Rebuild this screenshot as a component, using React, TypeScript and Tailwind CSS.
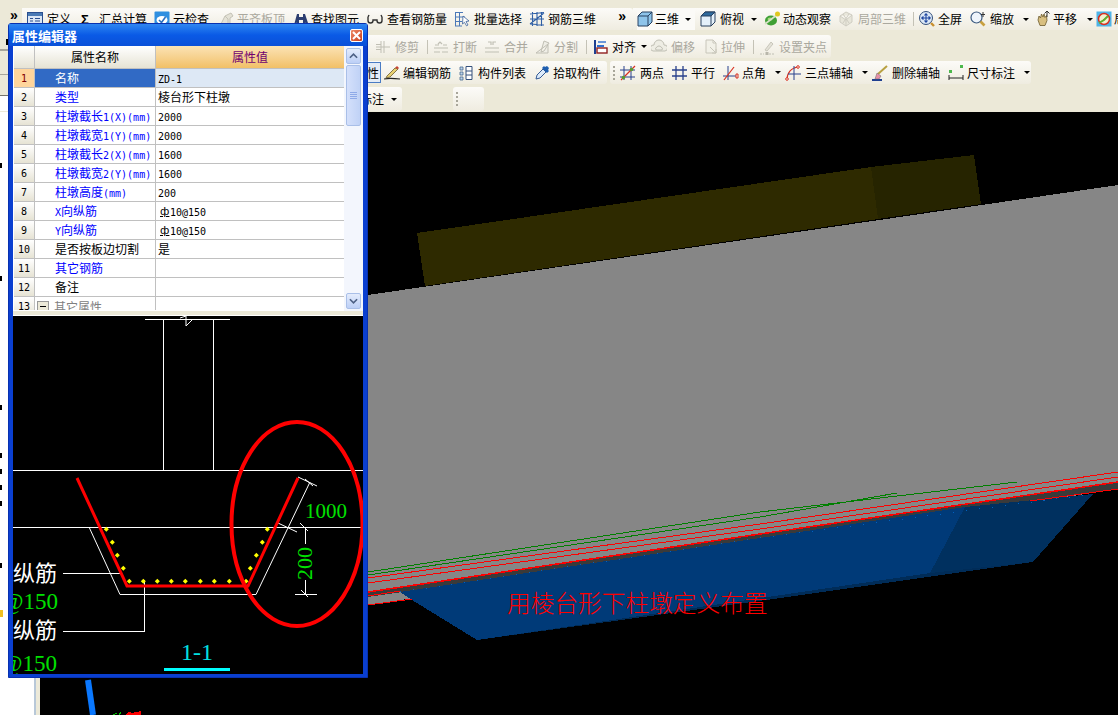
import type { ReactNode } from "react";

// 16x16 toolbar glyphs
const icons: Record<string, ReactNode> = {
  def: <><rect x=".5" y="1.5" width="15" height="13" fill="#dbe6f4" stroke="#2a4f8f" /><rect x="1" y="2" width="14" height="3" fill="#4a7ab5" /><path d="M3 7.5h3M8 7.5h5M3 10h3M8 10h5M3 12.5h3M8 12.5h5" stroke="#2a4f8f" /></>,
  cloud: <><rect x=".5" y=".5" width="15" height="15" rx="1" fill="#2f8fe0" /><ellipse cx="8" cy="9" rx="5.5" ry="4" fill="#fff" /><path d="M5 9l2.5 2.5L11.5 6" fill="none" stroke="#2a70c0" strokeWidth="1.6" /></>,
  flat: <path d="M2 13l4-8 6-3 2 3-3 2v5l-4 2H2zM6 5l3 3v5" fill="#e4e2d6" stroke="#c4c2b6" />,
  binoculars: <><path d="M4 3h2v3h4V3h2l3 9a2.5 2.5 0 1 1-5 1V9H6v4a2.5 2.5 0 1 1-5 1z" fill="#2c3e70" /><circle cx="3.6" cy="13" r="1.2" fill="#9db4dc" /><circle cx="12.4" cy="13" r="1.2" fill="#9db4dc" /></>,
  glasses: <path d="M1 6l1-2M15 6l-1-2M1 6v3.5a2.5 2.5 0 0 0 5 0V9h4v.5a2.5 2.5 0 0 0 5 0V6" fill="none" stroke="#333" strokeWidth="1.4" />,
  batch: <><path d="M1 1.5h8M1 6h10M1 10.5h7M1 15h7M1.500 1v14M5.500 1v14" stroke="#4a78b8" fill="none" /><path d="M9 5l6 5-3 .5 2 3.500-1.500.8-2-3.500L8.500 13z" fill="#fff" stroke="#3a5f99" strokeWidth=".8" /></>,
  rebar: <path d="M1 3l14-1.500M1 8h14M1 13l14 1M3.500 1v14M8 1v14M12.500 1v14M1 13L15 2" fill="none" stroke="#2f5fa5" strokeWidth="1.100" />,
  cube: <><path d="M1 5l4-4h10v10l-4 4H1z" fill="#8ec4ea" stroke="#28405f" /><path d="M1 5h10v10M11 5l4-4" fill="none" stroke="#28405f" /></>,
  top: <><path d="M1 5l4-4h10v10l-4 4H1z" fill="#e4f0fa" stroke="#28405f" /><path d="M1 5l4-4h10l-4 4z" fill="#2f6a9c" stroke="#28405f" /><path d="M11 5v10M11 5l4-4" fill="none" stroke="#28405f" /></>,
  orbit: <><ellipse cx="7" cy="9.500" rx="6" ry="5" fill="#3fa035" /><ellipse cx="6" cy="8" rx="2.500" ry="1.500" fill="#a4dc7c" /><path d="M1 13L14 3" stroke="#d8e0c8" strokeWidth="1.600" /><circle cx="13.500" cy="3" r="2.500" fill="#e0c820" /></>,
  mesh: <path d="M8 1l6 3v7l-6 4-6-4V5zM2 5l6 4 6-5M8 9v6M5 3l6 9M11 3l-6 9" fill="#e8e6da" stroke="#cfcdc2" />,
  full: <><circle cx="7" cy="7" r="6.500" fill="#dce8f6" stroke="#34507c" /><path d="M7 2.500v9M2.500 7h9M7 2.500L5.500 4.500M7 2.500l1.500 2M7 11.500l-1.500-2M7 11.500l1.500-2M2.500 7l2-1.500M2.500 7l2 1.500M11.500 7l-2-1.500M11.500 7l-2 1.500" fill="none" stroke="#1f47a0" strokeWidth="1.100" /><path d="M12 12l3 3" stroke="#c89030" strokeWidth="2.400" /></>,
  zoom: <><circle cx="6.500" cy="6.500" r="5.500" fill="#eef4fb" stroke="#3c5a80" strokeWidth="1.200" /><path d="M10.500 10.500l4 4" stroke="#c8a040" strokeWidth="2.600" /><path d="M13 1v5M11 3.500h4" stroke="#333" /></>,
  pan: <><path d="M3 9l1-4 1.500 2 1-4 1.500 3 1-3 1 3.500 1.500-2 .5 5-2 5H5z" fill="#d8bf80" stroke="#6c5a2c" strokeWidth=".8" /><path d="M12 0v6M9.500 2.500L12 0l2.500 2.500" fill="none" stroke="#333" /></>,
  report: <><rect x=".5" y=".5" width="15" height="15" fill="#4fb4e8" /><circle cx="8" cy="8" r="5.500" fill="#f4f0d0" stroke="#d83020" strokeWidth="1.500" /><path d="M3 12l5-3 4-4" stroke="#60b030" strokeWidth="2" /></>,
  trim: <path d="M1 8h14M6 2v12M9 2v12M1 5.500h5M1 10.500h5" fill="none" stroke="#c0bfb4" />,
  brk: <path d="M1 13h6M9 13h6M1 9h14M5 5l2-2 2 2M2 6h4M10 6h4" fill="none" stroke="#c0bfb4" strokeWidth="1.200" />,
  merge: <path d="M1 13h14M1 9h14M4 3h3v3M12 3H9v3" fill="none" stroke="#c0bfb4" strokeWidth="1.200" />,
  split: <path d="M1 14h12V6M1 14l12-9M9 2l5 2-5 8-3 1 1-4z" fill="#efeee6" stroke="#c0bfb4" />,
  align: <><path d="M2 1v14" stroke="#1f3f90" strokeWidth="2" /><rect x="4" y="9" width="10" height="5" fill="#fff" stroke="#902020" strokeWidth="1.400" /><rect x="4" y="6" width="7" height="2" fill="#2f6fd0" /><path d="M5 3h8" stroke="#2f6fd0" strokeWidth="1.400" /></>,
  offset: <path d="M2 12a3 3 0 0 1 1-6 5 5 0 0 1 10 0 3 3 0 0 1 1 6zM5 11a2 2 0 0 1 1-3 2.500 2.500 0 0 1 4 0 2 2 0 0 1 1 3z" fill="#eeede4" stroke="#c0bfb4" />,
  stretch: <path d="M3 1h7l3 3v10H3zM10 1v3h3M7 8l6 6M13 10v4H9" fill="#f2f1e8" stroke="#c8c6ba" />,
  grip: <><path d="M1 15h4M10 15h5" stroke="#c0bfb4" strokeDasharray="2 1" /><rect x="6.500" y="13" width="3" height="3" fill="#b8b6aa" /><path d="M6 11l6-8 2 2-6 7z" fill="#e4e2d8" stroke="#c8c6ba" /></>,
  pencil: <><path d="M0 14c4-1 8-1 16 0" stroke="#222" strokeWidth="1.200" fill="none" /><path d="M3 11l8-8 3 1-8 8-4 1z" fill="#e8d070" stroke="#6a5a30" strokeWidth=".8" /><path d="M11 3l2-2 2 2-1 1z" fill="#c84030" /></>,
  list: <><path d="M1 2h3v3H1zM1 7h3v3H1zM1 12h3v3H1z" fill="#bcd4ec" stroke="#4a6a90" strokeWidth=".8" /><path d="M7 1.500h6v13H7zM7 6h6M7 10h6" fill="#fff" stroke="#34507c" /></>,
  pick: <><path d="M2 14l1-4 6-6 3 3-6 6z" fill="#dceafa" stroke="#345a94" /><path d="M8 3l2-2 1 1 2-1 2 2-1 2 1 1-2 2z" fill="#1f5fb0" /></>,
  two: <><path d="M4 1v14M11 1v14M0 5h15M0 12h15" fill="none" stroke="#28408c" /><path d="M1 15L15 1" stroke="#d83020" strokeWidth="1.200" /><circle cx="3.500" cy="12.500" r="1.800" fill="#5a9a30" /><circle cx="11.500" cy="4.500" r="1.800" fill="#5a9a30" /></>,
  para: <path d="M4 1v14M11 1v14M0 5h15M0 11h15" fill="none" stroke="#28408c" strokeWidth="1.300" />,
  angle: <><path d="M5 1v14M0 11h13" fill="none" stroke="#28408c" /><path d="M1 15L11 2" stroke="#d83020" strokeWidth="1.200" /><path d="M13 9h2v4h-2z" fill="none" stroke="#d83020" /></>,
  arc: <><path d="M2 15C2 8 6 3 13 2" fill="none" stroke="#d83020" strokeWidth="1.200" /><path d="M9 1v14M3 9h13" fill="none" stroke="#28408c" /><circle cx="2" cy="14" r="1.300" fill="#fff" stroke="#d83020" /><circle cx="13" cy="2" r="1.300" fill="#fff" stroke="#d83020" /></>,
  broom: <><path d="M0 15h10" stroke="#1f3f90" strokeWidth="2" /><path d="M6 9L15 1" stroke="#b8a040" strokeWidth="2" /><path d="M3 14l2-6 4 3-2 3z" fill="#e890a8" stroke="#666" strokeWidth=".5" /></>,
  dim: <><rect x="1" y="5" width="3" height="3" fill="#4cb84c" /><rect x="12" y="0" width="3" height="3" fill="#4cb84c" /><path d="M1 10v5M15 10v5M1 13h14" stroke="#222" /></>,
};

function Icon({ name }: { name: string }) {
  return <svg viewBox="0 0 16 16" className="w-4 h-4 shrink-0">{icons[name]}</svg>;
}

function Caret({ className = "" }: { className?: string }) {
  return <span className={`w-0 h-0 shrink-0 border-x-[3px] border-x-transparent border-t-[3px] border-t-black ${className}`} />;
}

function Sep({ className = "" }: { className?: string }) {
  return <span className={`w-px h-[14px] shrink-0 bg-[#c4c2b6] ${className}`} />;
}

function Handle({ className = "" }: { className?: string }) {
  return <span className={`w-[2px] h-[14px] border-l-2 border-dotted border-[#a8a69a] ${className}`} />;
}

function Tool({ icon, label, off, className = "", gap = "gap-[4px]" }: { icon?: string; label: string; off?: boolean; className?: string; gap?: string }) {
  return (
    <span className={`flex items-center whitespace-nowrap shrink-0 ${gap} ${off ? "text-[#aaa89e]" : "text-black"} ${className}`}>
      {icon && <Icon name={icon} />}
      {label}
    </span>
  );
}

const barBg = "bg-linear-to-b from-[#fcfbf8] to-[#efece0]";

function Toolbars() {
  return (
    <div className="h-[112px] bg-[#ece9d8] text-[12px] flex flex-col shrink-0">
      {/* row 1 */}
      <div className="flex h-[22px] mt-[8px]">
        <span className="w-[22px] pl-[10px] text-[14px] font-bold leading-[14px] [font-family:'Liberation_Sans',sans-serif]">»</span>
        <div className={`w-[611px] flex items-center pl-[5px] rounded-r-[3px] ${barBg}`}>
          <Tool icon="def" label="定义" />
          <span className="ml-[10px] w-[14px] text-[13px] font-bold leading-none [font-family:'Liberation_Sans',sans-serif]">Σ</span>
          <Tool label="汇总计算" className="ml-[4px]" />
          <Tool icon="cloud" label="云检查" className="ml-[7px]" gap="gap-[3px]" />
          <Tool icon="flat" label="平齐板顶" off className="ml-[10px]" gap="gap-[2px]" />
          <Tool icon="binoculars" label="查找图元" className="ml-[8px]" gap="gap-[2px]" />
          <Tool icon="glasses" label="查看钢筋量" className="ml-[8px]" />
          <Tool icon="batch" label="批量选择" className="ml-[7px]" />
          <Tool icon="rebar" label="钢筋三维" className="ml-[7px]" gap="gap-[3px]" />
          <span className="ml-[22px] text-[14px] font-bold leading-none -mt-[6px] [font-family:'Liberation_Sans',sans-serif]">»</span>
        </div>
        <div className={`flex-1 flex items-center pl-[4px] overflow-hidden ${barBg}`}>
          <span className="flex items-center h-[22px] w-[58px] bg-[#fbfaf7] shrink-0">
            <Tool icon="cube" label="三维" gap="gap-[2px]" />
            <Caret className="ml-[6px]" />
          </span>
          <Tool icon="top" label="俯视" className="ml-[5px]" />
          <Caret className="ml-[7px]" />
          <Tool icon="orbit" label="动态观察" className="ml-[7px]" gap="gap-[3px]" />
          <Tool icon="mesh" label="局部三维" off className="ml-[7px]" />
          <Sep className="ml-[7px]" />
          <Tool icon="full" label="全屏" className="ml-[5px]" gap="gap-[3px]" />
          <Tool icon="zoom" label="缩放" className="ml-[8px]" />
          <Caret className="ml-[9px]" />
          <Tool icon="pan" label="平移" className="ml-[6px]" gap="gap-[2px]" />
          <Caret className="ml-[10px]" />
          <Tool icon="report" label="局" className="ml-[3px]" gap="gap-[2px]" />
        </div>
      </div>
      {/* row 2 */}
      <div className="flex h-[23px] mt-[5px]">
        <span className="w-[8px] h-[16px] border-b-2 border-[#a8a69c] shrink-0 flex justify-end items-center">
          <span className="w-[2px] h-[6px] bg-black" />
        </span>
        <div className={`w-[823px] flex items-center pl-[367px] rounded-r-[3px] ${barBg}`}>
          <Tool icon="trim" label="修剪" off />
          <Sep className="ml-[8px]" />
          <Tool icon="brk" label="打断" off className="ml-[5px]" />
          <Tool icon="merge" label="合并" off className="ml-[7px]" />
          <Tool icon="split" label="分割" off className="ml-[7px]" gap="gap-[3px]" />
          <Sep className="ml-[8px]" />
          <Tool icon="align" label="对齐" className="ml-[6px]" gap="gap-[3px]" />
          <Caret className="ml-[5px]" />
          <Tool icon="offset" label="偏移" off className="ml-[4px]" />
          <Tool icon="stretch" label="拉伸" off className="ml-[8px]" gap="gap-[2px]" />
          <Sep className="ml-[8px]" />
          <Tool icon="grip" label="设置夹点" off className="ml-[5px]" />
        </div>
      </div>
      {/* row 3 */}
      <div className="flex h-[23px] mt-[3px]">
        <span className="w-[8px] h-[14px] border-b border-[#a8a69c] shrink-0" />
        <div className={`w-[599px] flex items-center pl-[352px] rounded-r-[3px] ${barBg}`}>
          <span className="w-[21px] h-[21px] border border-[#4a7cc4] bg-[#e4ecf6] flex items-center justify-end pr-[1px] shrink-0">性</span>
          <Tool icon="pencil" label="编辑钢筋" className="ml-[3px]" gap="gap-[3px]" />
          <Tool icon="list" label="构件列表" className="ml-[8px]" gap="gap-[3px]" />
          <Tool icon="pick" label="拾取构件" className="ml-[8px]" gap="gap-[3px]" />
        </div>
        <div className={`ml-[3px] w-[421px] flex items-center pl-[3px] rounded-[3px] ${barBg}`}>
          <Handle />
          <Tool icon="two" label="两点" className="ml-[5px]" />
          <Tool icon="para" label="平行" className="ml-[8px]" gap="gap-[3px]" />
          <Tool icon="angle" label="点角" className="ml-[8px]" gap="gap-[3px]" />
          <Caret className="ml-[9px]" />
          <Tool icon="arc" label="三点辅轴" className="ml-[4px]" />
          <Caret className="ml-[9px]" />
          <Tool icon="broom" label="删除辅轴" className="ml-[4px]" />
          <Tool icon="dim" label="尺寸标注" className="ml-[8px]" gap="gap-[3px]" />
          <Caret className="ml-[9px]" />
        </div>
      </div>
      {/* row 4 */}
      <div className="flex h-[24px] mt-[3px]">
        <span className="w-[8px] h-[24px] shrink-0 flex flex-col bg-white">
          <span className="h-[9px] bg-[#ece9d8] border-b border-[#77756c]" />
        </span>
        <div className={`w-[394px] flex items-center pl-[358px] rounded-r-[3px] ${barBg}`}>
          <Tool label="标注" className="-ml-[6px]" />
          <Caret className="ml-[7px]" />
        </div>
        <div className={`ml-[51px] w-[31px] flex items-center pl-[3px] rounded-[3px] ${barBg}`}>
          <Handle />
        </div>
      </div>
    </div>
  );
}

const rows: { name: string; value?: string; blue?: boolean; rebar?: boolean }[] = [
  { name: "名称", value: "ZD-1" },
  { name: "类型", value: "棱台形下柱墩", blue: true },
  { name: "柱墩截长1(X)(mm)", value: "2000", blue: true },
  { name: "柱墩截宽1(Y)(mm)", value: "2000", blue: true },
  { name: "柱墩截长2(X)(mm)", value: "1600", blue: true },
  { name: "柱墩截宽2(Y)(mm)", value: "1600", blue: true },
  { name: "柱墩高度(mm)", value: "200", blue: true },
  { name: "X向纵筋", value: "10@150", blue: true, rebar: true },
  { name: "Y向纵筋", value: "10@150", blue: true, rebar: true },
  { name: "是否按板边切割", value: "是" },
  { name: "其它钢筋", blue: true },
  { name: "备注" },
];

// CJK runs stay 12px, latin runs drop to the 6px-wide mono the grid uses
function Mixed({ text }: { text: string }) {
  const parts = text.match(/[\x00-\x7f]+|[^\x00-\x7f]+/g) ?? [];
  return (
    <>
      {parts.map((p, i) =>
        /^[\x00-\x7f]/.test(p) ? (
          <span key={i} className="text-[10px] [font-family:'DejaVu_Sans_Mono',monospace]">{p}</span>
        ) : (
          <span key={i}>{p}</span>
        )
      )}
    </>
  );
}

function ScrollBtn({ up }: { up?: boolean }) {
  return (
    <div className="h-[16px] rounded-[2px] border border-[#a9bfe8] bg-linear-to-b from-[#e4ecfc] to-[#bccff6] flex items-center justify-center">
      <svg viewBox="0 0 10 6" className="w-[9px] h-[6px]">
        <path d={up ? "M1 5l4-4 4 4" : "M1 1l4 4 4-4"} fill="none" stroke="#4d6185" strokeWidth="1.800" />
      </svg>
    </div>
  );
}

function PropertyGrid() {
  return (
    <div className="h-[265px] shrink-0 flex bg-white text-[12px] overflow-hidden">
      <div className="w-[331px] pl-[1px] flex flex-col">
        <div className="h-[23px] flex shrink-0 border-b border-[#c0c0c0]">
          <div className="w-[21px] border-r border-[#c0c0c0] bg-linear-to-b from-white to-[#e6e3d4]" />
          <div className="w-[121px] border-r border-[#c0c0c0] bg-linear-to-b from-white to-[#e6e3d4] flex items-center justify-center">属性名称</div>
          <div className="flex-1 bg-linear-to-b from-[#fbe3b4] to-[#f2c066] flex items-center justify-center text-[#700070]">属性值</div>
        </div>
        {rows.map((r, i) => (
          <div key={r.name} className="h-[19px] flex shrink-0 border-b border-[#c0c0c0]">
            <div className={`w-[21px] border-r border-[#c0c0c0] flex items-center justify-center text-[10px] [font-family:'DejaVu_Sans_Mono',monospace] ${i === 0 ? "bg-[#ffd59c] text-[#800000]" : "bg-linear-to-b from-white to-[#e6e3d4]"}`}>{i + 1}</div>
            <div className={`w-[121px] border-r border-[#c0c0c0] pl-[20px] flex items-center whitespace-nowrap ${i === 0 ? "bg-[#316ac5] text-white" : r.blue ? "text-[#0000ff]" : "text-black"}`}>
              <span><Mixed text={r.name} /></span>
            </div>
            <div className={`flex-1 pl-[2px] flex items-center whitespace-nowrap ${i === 0 ? "bg-[#dde8f5]" : ""}`}>
              {r.rebar && <span className="ml-[2px] w-[9px] text-[11px] underline leading-none [font-family:'DejaVu_Sans',sans-serif]">ф</span>}
              {r.value && <span className={r.rebar ? "ml-[1px]" : ""}><Mixed text={r.value} /></span>}
            </div>
          </div>
        ))}
        <div className="h-[13px] flex shrink-0 overflow-hidden">
          <div className="w-[21px] h-[19px] border-r border-[#c0c0c0] bg-linear-to-b from-white to-[#e6e3d4] flex items-center justify-center text-[10px] [font-family:'DejaVu_Sans_Mono',monospace]">13</div>
          <div className="w-[121px] h-[19px] border-r border-[#c0c0c0] pl-[2px] flex items-center text-[#808080]">
            <span className="w-[12px] h-[12px] border border-[#999] bg-[#ece9d8] flex items-center justify-center"><span className="w-[6px] h-px bg-black" /></span>
            <span className="ml-[5px]">其它属性</span>
          </div>
        </div>
      </div>
      <div className="w-[19px] px-[2px] py-[2px] flex flex-col bg-[#f3f6fd]">
        <ScrollBtn up />
        <div className="mt-[1px] h-[61px] rounded-[2px] border border-[#a9bfe8] bg-linear-to-r from-[#d4e0fb] to-[#c0d2f6] flex flex-col items-center justify-center gap-[1px]">
          <span className="w-[7px] h-px bg-[#8eaae8]" />
          <span className="w-[7px] h-px bg-[#8eaae8]" />
          <span className="w-[7px] h-px bg-[#8eaae8]" />
          <span className="w-[7px] h-px bg-[#8eaae8]" />
        </div>
        <div className="flex-1" />
        <ScrollBtn />
      </div>
    </div>
  );
}

const dots: [number, number][] = [[319, 88], [337, 127], [352, 166], [370, 205], [388, 244], [430, 244], [472, 244], [514, 244], [556, 244], [601, 244], [643, 244], [688, 244], [738, 244], [751, 205], [769, 166], [787, 127], [802, 88]];

// section drawing, viewBox is in page pixels
function Section() {
  const serif = "Liberation Serif, serif";
  const cjk = "Noto Sans CJK SC, sans-serif";
  return (
    <svg viewBox="13 316 350 358" className="w-[350px] h-[358px] bg-black block shrink-0" shapeRendering="crispEdges">
      <g stroke="#fff" fill="none">
        <path d="M145 319.500H230M163.500 319.500V470.500M213.500 319.500V470.500M13 470.500H363M13 527.500H363" />
        <path d="M180 318l6-2v10l7-7" shapeRendering="auto" />
        <path d="M89 527L120 594.500H256L310 482M298 477L317 486M278 523L297 532M305 479L313 486" shapeRendering="auto" />
        <path d="M305.500 527V544M305.500 580V594M295 594.500H317M300 523L308 531M301 590L308 597" shapeRendering="auto" />
        <path d="M63 573.500H122M63 631.500H144.500V580" />
      </g>
      <path d="M77 478L127 586H248L298 478" fill="none" stroke="#ff0000" strokeWidth="3" shapeRendering="auto" />
      {dots.map(([x, y]) => (
        <path key={x} d={`M${x / 3} ${500 + y / 3 - 2.5}l2.500 2.500-2.500 2.500-2.500-2.500z`} fill="#ffff00" shapeRendering="auto" />
      ))}
      <ellipse cx="297" cy="524" rx="65.500" ry="102" fill="none" stroke="#ff0000" strokeWidth="4" shapeRendering="auto" />
      <text x="305" y="518" fontFamily={serif} fontSize="21" fill="#00e000">1000</text>
      <text transform="translate(312 580) rotate(-90)" fontFamily={serif} fontSize="22" fill="#00e000">200</text>
      <text x="13" y="581" fontFamily={cjk} fontSize="22" fill="#fff">纵筋</text>
      <text x="13" y="638" fontFamily={cjk} fontSize="22" fill="#fff">纵筋</text>
      <text x="58" y="609" textAnchor="end" fontFamily={serif} fontSize="23" fill="#00e000">@150</text>
      <text x="57" y="671" textAnchor="end" fontFamily={serif} fontSize="23" fill="#00e000">@150</text>
      <text x="181" y="660" fontFamily={serif} fontSize="24" fill="#00e0e0">1-1</text>
      <rect x="164" y="668" width="66" height="3" fill="#00ffff" />
    </svg>
  );
}

function PropertyWindow() {
  return (
    <div className="absolute left-[8px] top-[23px] w-[360px] h-[655px] px-[4px] pb-[3px] flex flex-col bg-[#0a3fd0] border border-[#0831b0] rounded-t-[3px]">
      <div className="h-[22px] -mx-[4px] pl-[3px] pr-[4px] flex items-center justify-between bg-linear-to-b from-[#2f86f0] via-[#0a5ae6] to-[#0a50d8] shrink-0">
        <span className="text-white text-[13px] font-bold leading-none">属性编辑器</span>
        <span className="w-[13px] h-[13px] rounded-[2px] border border-white bg-linear-to-br from-[#ee8a66] to-[#c83a14] flex items-center justify-center">
          <svg viewBox="0 0 9 9" className="w-[9px] h-[9px]"><path d="M1 1l7 7M8 1L1 8" stroke="#fff" strokeWidth="2" /></svg>
        </span>
      </div>
      <PropertyGrid />
      <div className="h-[5px] bg-[#ece9d8] border-b border-white shrink-0" />
      <Section />
    </div>
  );
}

// 3D view, viewBox is in page pixels
function Scene() {
  return (
    <svg viewBox="40 112 1078 603" className="w-[1078px] h-[603px] bg-black block" shapeRendering="crispEdges">
      <path d="M417 233L871 167L878 219L425 286Z" fill="#2e2a00" />
      <path d="M871 167L974 155L981 204L878 219Z" fill="#262400" />
      <path d="M368 295L1118 185V489L368 605Z" fill="#868686" />
      <path d="M368 592L1118 482V489L368 597Z" fill="#3a3a3a" />
      <path d="M400 592L760 538L965 507L930 573L477 640L412 600Z" fill="#003a78" />
      <path d="M965 507L1093 494L1033 562L930 573Z" fill="#00305f" />
      <path d="M477 640L930 573L1033 562L766 600Z" fill="#002c58" />
      <path d="M400 592L760 538L1093 494" stroke="#0060c0" strokeWidth="1" strokeDasharray="1 12" fill="none" />
      <path d="M368 572L760 512L1017 482M368 575L760 517L897 493" stroke="#008000" fill="none" />
      <path d="M368 578L760 524L1118 472M368 583L760 529L1118 477M368 596L400 591M368 605L412 599M1030 501L1118 489" stroke="#ff0000" fill="none" />
      <path d="M368 592L760 534L1118 482" stroke="#ff0000" strokeWidth="1.500" fill="none" />
      <text x="507" y="612" fontFamily="Noto Sans CJK SC, sans-serif" fontSize="23.700" fill="#ff0000" fontWeight="300">用棱台形下柱墩定义布置</text>
      <path d="M88 680L93 715" stroke="#0a78ff" strokeWidth="6" shapeRendering="auto" />
      <path d="M125 715l4-3 3 1 4-1 5-1v4z" fill="#ff0000" />
      <path d="M113 715l4-2M119 715l2-3" stroke="#00c000" />
    </svg>
  );
}

function LeftStrip() {
  return (
    <div className="w-[40px] shrink-0 flex bg-white">
      <div className="w-[34px] flex flex-col items-start">
        <span className="mt-[51px] w-[2px] h-[5px] bg-black" />
        <span className="mt-[108px] w-[2px] h-[5px] bg-black" />
        <span className="mt-[124px] w-[2px] h-[5px] bg-black" />
        <span className="mt-[43px] w-[2px] h-[5px] bg-black" />
        <span className="mt-[11px] w-[2px] h-[5px] bg-black" />
        <span className="mt-[11px] w-[2px] h-[5px] bg-black" />
        <span className="mt-[11px] w-[2px] h-[5px] bg-black" />
        <span className="mt-[57px] w-[2px] h-[5px] bg-black" />
        <span className="mt-[42px] w-[3px] h-[7px] bg-[#f0c020]" />
      </div>
      <div className="w-[2px] bg-[#b8c8d8]" />
      <div className="w-[4px] bg-[#ece9d8]" />
    </div>
  );
}

export default function App() {
  return (
    <div className="relative w-[1118px] h-[715px] overflow-hidden flex flex-col bg-[#ece9d8] font-['Noto_Sans_CJK_SC','Liberation_Sans',sans-serif]">
      <Toolbars />
      <div className="flex-1 flex min-h-0">
        <LeftStrip />
        <Scene />
      </div>
      <PropertyWindow />
    </div>
  );
}
